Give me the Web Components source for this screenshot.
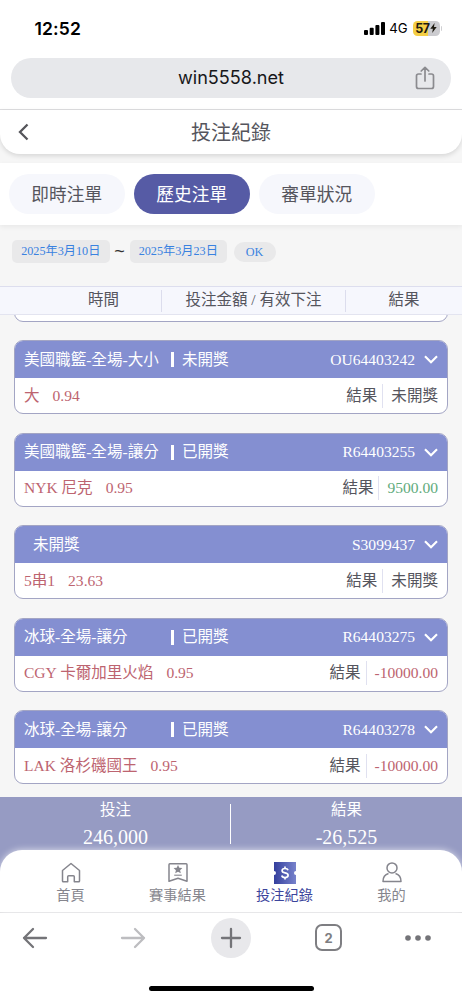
<!DOCTYPE html>
<html lang="zh-Hant">
<head>
<meta charset="UTF-8">
<meta name="viewport" content="width=device-width, initial-scale=1.0">
<title>投注紀錄</title>
<style>
    :root {
        --primary: #565ba5;
        --card-head: #848fd1;
        --card-line: #a3a5c4;
        --text: #55555d;
        --serif: "Liberation Serif", "Noto Sans CJK TC", serif;
        --sans: "Noto Sans CJK TC", sans-serif;
        --ui: Inter, "Liberation Sans", sans-serif;
    }
    body {
        margin: 0;
        width: 462px;
        height: 1000px;
        overflow: hidden;
        background: #f6f6f6;
        font-family: var(--serif);
        color: var(--text);
    }
</style>
</head>
<body>
<bet-app></bet-app>

<script>
// --- Small helper: attach a shadow root with markup --- //
class BaseElement extends HTMLElement {
    connectedCallback() {
        if (this.shadowRoot) return;
        this.attachShadow({ mode: 'open' });
        this.shadowRoot.innerHTML = this.render();
    }
    attr(name) {
        return this.getAttribute(name) || '';
    }
}

// --- Phone status bar --- //
class StatusBar extends BaseElement {
    render() {
        return `
            <style>
                :host {
                    display: flex; align-items: center; justify-content: space-between;
                    box-sizing: border-box; height: 58px; padding: 0 20px 2px 34.5px;
                    background: #fff; color: #000; font-family: var(--ui);
                }
                .time { font-size: 17.5px; font-weight: 600; letter-spacing: 0.15px; }
                .right { display: flex; align-items: center; }
                .net { font-size: 13.2px; margin: 0 5px 0 4.5px; }
                .battery {
                    display: flex; align-items: center; justify-content: center;
                    width: 27px; height: 15px; border-radius: 4.5px; color: #1d1a10;
                    background: linear-gradient(90deg, #f4ce45 57%, #cbcbcf 57%);
                    font-size: 12.5px; font-weight: 700; letter-spacing: -0.5px;
                }
                .tip { width: 1.5px; height: 5px; margin-left: 1px; border-radius: 0 2px 2px 0; background: #cfcfd2; }
            </style>
            <span class="time">12:52</span>
            <div class="right">
                <svg width="21" height="13" viewBox="0 0 21 13">
                    <rect x="0" y="8" width="4" height="5" rx="1"/>
                    <rect x="5.7" y="5.7" width="4" height="7.3" rx="1"/>
                    <rect x="11.4" y="3" width="4" height="10" rx="1"/>
                    <rect x="17" y="0" width="4" height="13" rx="1"/>
                </svg>
                <span class="net">4G</span>
                <span class="battery">57<svg width="7" height="10" viewBox="0 0 7 10"><path d="M4.6 0 .3 5.7h2.6L2.2 10l4.5-5.9H4z" fill="#1d1a10"/></svg></span>
                <span class="tip"></span>
            </div>
        `;
    }
}
customElements.define('status-bar', StatusBar);

// --- Browser address bar --- //
class AddressBar extends BaseElement {
    render() {
        return `
            <style>
                :host { display: block; height: 51px; padding: 0 11px; background: #fff; border-bottom: 1px solid #dedee0; }
                .pill {
                    display: grid; grid-template-columns: 40px 1fr 40px; align-items: center;
                    height: 40px; border-radius: 20px; background: #e7e8eb;
                }
                .url { grid-column: 2; text-align: center; font: 18.1px var(--ui); color: #17171a; padding-bottom: 2px; }
                svg { margin-left: 4px; }
            </style>
            <div class="pill">
                <span class="url"><slot></slot></span>
                <svg width="20" height="24" viewBox="0 0 20 24" fill="none" stroke="#8b8b8f" stroke-width="1.7" stroke-linecap="round" stroke-linejoin="round">
                    <path d="M6 8H3.5Q1.5 8 1.5 10v10.500q0 2 2 2h13q2 0 2-2V10q0-2-2-2H14M10 15V1.500M6.200 5 10 1.300 13.800 5"/>
                </svg>
            </div>
        `;
    }
}
customElements.define('address-bar', AddressBar);

// --- Page title with back arrow --- //
class PageHeader extends BaseElement {
    render() {
        return `
            <style>
                :host {
                    display: grid; grid-template-columns: 48px 1fr 48px; align-items: center;
                    height: 44px; background: #fff; border-radius: 0 0 20px 20px;
                    box-shadow: 0 2px 5px rgba(0,0,0,0.13);
                }
                .title { text-align: center; font: 20px/44px var(--sans); height: 44px; }
                svg { margin-left: 17px; }
            </style>
            <svg width="13" height="18" viewBox="0 0 13 18" fill="none" stroke="#55555a" stroke-width="2.300"><path d="M10.500 1.500 3 9l7.500 7.500"/></svg>
            <span class="title"><slot></slot></span>
        `;
    }
}
customElements.define('page-header', PageHeader);

// --- Tabs --- //
class TabItem extends BaseElement {
    render() {
        return `
            <style>
                :host {
                    display: block; width: 115.500px; height: 40px; border-radius: 20px;
                    background: #f6f7fc; text-align: center; font: 17.700px/38px var(--sans);
                }
                :host([active]) { background: var(--primary); color: #fff; }
            </style>
            <slot></slot>
        `;
    }
}
customElements.define('tab-item', TabItem);

class TabBar extends BaseElement {
    render() {
        return `
            <style>
                :host {
                    display: flex; gap: 9.500px; box-sizing: border-box; height: 62px; margin-top: 9px;
                    padding: 11px 9px; background: #fff; box-shadow: 0 2px 5px rgba(0,0,0,0.06);
                }
            </style>
            <slot></slot>
        `;
    }
}
customElements.define('tab-bar', TabBar);

// --- Date range filter --- //
class DateRange extends BaseElement {
    render() {
        return `
            <style>
                :host { display: flex; align-items: center; height: 24px; margin: 14px 0 0 12px; color: #3a82e0; font-size: 12.200px; }
                .date { width: 97.500px; height: 23px; line-height: 23px; border-radius: 5px; background: #e9e9ea; text-align: center; }
                .sep { width: 20px; text-align: center; color: #333; font: 18px/22px "Liberation Sans", sans-serif; }
                .ok { width: 42px; height: 20px; line-height: 20px; margin: 1px 0 0 6.500px; border-radius: 10px; background: #e9e9ea; text-align: center; }
            </style>
            <span class="date">${this.attr('from')}</span>
            <span class="sep">~</span>
            <span class="date">${this.attr('to')}</span>
            <span class="ok">OK</span>
        `;
    }
}
customElements.define('date-range', DateRange);

// --- Column titles --- //
class ColumnTitles extends BaseElement {
    render() {
        return `
            <style>
                :host {
                    display: grid; grid-template-columns: 161px 184px 117px; align-items: center;
                    box-sizing: border-box; height: 29px; margin-top: 23px; background: #f6f7fd;
                    border-top: 1px solid #dddeee; border-bottom: 1px solid #e3e4f0;
                    font-size: 15.500px; line-height: 20px; text-align: center;
                }
                span { padding-bottom: 2px; }
                span + span { border-left: 1px solid #dcdded; }
                .first { padding-left: 46px; }
            </style>
            <span class="first">時間</span><span>投注金額 / 有效下注</span><span>結果</span>
        `;
    }
}
customElements.define('column-titles', ColumnTitles);

// --- Bet card --- //
class BetCard extends BaseElement {
    render() {
        const game = this.attr('game');
        const amount = this.attr('result');
        const tone = amount.startsWith('-') ? 'lose' : /^\d/.test(amount) ? 'win' : '';
        return `
            <style>
                :host {
                    display: block; box-sizing: border-box; height: 74px; margin-bottom: 18.500px;
                    border: 1px solid var(--card-line); border-radius: 9px; overflow: hidden;
                    background: #fff; font-size: 15.550px; line-height: 24px;
                }
                .head {
                    display: flex; align-items: center; height: 37px; padding: 0 9px;
                    background: var(--card-head); color: #fff;
                }
                .game { width: 147px; }
                .bar { width: 2.500px; height: 15px; background: #fff; margin-right: 8.500px; }
                .head.plain .state { margin-left: 9px; }
                .no { margin-left: auto; }
                .head svg { margin-left: 9px; }
                .body { display: flex; align-items: center; height: 35px; padding: 0 9px; }
                .pick { color: #bd6470; white-space: pre; }
                .odds { margin-left: 13px; }
                .label { margin-left: auto; }
                .value { margin-left: 5px; padding-left: 8px; border-left: 1px solid #e0e1f0; }
                .win { color: #61ab7c; }
                .lose { color: #bd6470; }
            </style>
            <div class="head ${game ? '' : 'plain'}">
                ${game ? `<span class="game">${game}</span><i class="bar"></i>` : ''}
                <span class="state">${this.attr('state')}</span>
                <span class="no">${this.attr('no')}</span>
                <svg width="14" height="9" viewBox="0 0 14 9" fill="none" stroke="#fff" stroke-width="2.200"><path d="M1 1.200 7 7.200l6-6"/></svg>
            </div>
            <div class="body">
                <span class="pick">${this.attr('pick')}<span class="odds">${this.attr('odds')}</span></span>
                <span class="label">結果</span>
                <span class="value ${tone}">${amount}</span>
            </div>
        `;
    }
}
customElements.define('bet-card', BetCard);

class BetList extends BaseElement {
    render() {
        return `
            <style>
                :host { display: block; box-sizing: border-box; height: 482px; padding: 0 14px; overflow: hidden; }
                .tail { overflow: hidden; height: 7px; margin-bottom: 18px; }
                .tail::before {
                    content: ""; display: block; box-sizing: border-box; height: 40px; margin-top: -33px;
                    border: 1px solid var(--card-line); border-radius: 9px; background: #fff;
                }
            </style>
            <div class="tail"></div>
            <slot></slot>
        `;
    }
}
customElements.define('bet-list', BetList);

// --- Totals --- //
class TotalBar extends BaseElement {
    render() {
        return `
            <style>
                :host {
                    display: grid; grid-template-columns: 1fr 1fr; box-sizing: border-box;
                    height: 86px; margin-bottom: -33px; background: #969bc3; color: #fff; text-align: center;
                }
                .cell { position: relative; }
                .cell + .cell::before {
                    content: ""; position: absolute; left: -1px; top: 7px;
                    width: 1px; height: 40px; background: #fff;
                }
                .label { font-size: 15.500px; line-height: 25px; }
                .sum { font-size: 20px; line-height: 30px; }
            </style>
            <div class="cell"><div class="label">投注</div><div class="sum">${this.attr('stake')}</div></div>
            <div class="cell"><div class="label">結果</div><div class="sum">${this.attr('result')}</div></div>
        `;
    }
}
customElements.define('total-bar', TotalBar);

// --- Site navigation --- //
class NavItem extends BaseElement {
    render() {
        return `
            <style>
                :host { display: flex; flex-direction: column; align-items: center; width: 107px; color: #85858d; font: 14.200px/20px var(--sans); }
                :host([active]) { color: #3c459c; }
                .icon { display: flex; height: 22px; }
            </style>
            <span class="icon"><slot name="icon"></slot></span>
            <span><slot></slot></span>
        `;
    }
}
customElements.define('nav-item', NavItem);

class SiteNav extends BaseElement {
    render() {
        return `
            <style>
                :host {
                    display: flex; justify-content: center; position: relative; box-sizing: border-box;
                    height: 62px; padding-top: 12px; background: #fff; border-radius: 22px 22px 0 0;
                    box-shadow: 0 0 7px rgba(255,255,255,0.7);
                }
                svg { display: block; }
            </style>
            <nav-item><svg slot="icon" width="20" height="22" viewBox="0 0 20 22" fill="none" stroke="#85858d" stroke-width="1.500" stroke-linejoin="round">
                <path d="M1.500 8.500 10 1.500l8.500 7V19q0 .8-.8.8h-4.400v-5q0-1-1-1H7.700q-1 0-1 1v5H2.300q-.8 0-.8-.8z"/>
            </svg>首頁</nav-item>
            <nav-item><svg slot="icon" width="20" height="22" viewBox="0 0 20 22" fill="none" stroke="#85858d" stroke-width="1.500" stroke-linejoin="round">
                <path d="M1.900 1.800h16.200q.9 0 .9 1v16.500L10 16.300l-9 3V2.800q0-1 .9-1z"/>
                <path d="m10 3 1.300 2.800 3.100.3-2.300 2.100.7 3.100-2.800-1.600-2.800 1.600.7-3.100-2.300-2.100 3.100-.3z" fill="#85858d" stroke="none"/>
                <path d="M6.200 13.200h7.600" stroke-width="1.100"/>
            </svg>賽事結果</nav-item>
            <nav-item active><svg slot="icon" width="22" height="22" viewBox="0 0 22 22">
                <defs><linearGradient id="ticket" x1="0" y1="0" x2="1" y2="0"><stop offset="0" stop-color="#343f9d"/><stop offset="1" stop-color="#7883cc"/></linearGradient></defs>
                <path d="M0 0h22v9a2 2 0 0 0 0 4v9H0v-9a2 2 0 0 0 0-4z" fill="url(#ticket)"/>
                <path d="M14 8.300c-.3-1.200-1.400-1.800-3-1.800-1.700 0-2.900.8-2.900 2.200 0 3.200 6 1.300 6 4.500 0 1.500-1.300 2.300-3.100 2.300-1.700 0-2.900-.7-3.200-2M11 4.500v2M11 15.500v2" fill="none" stroke="#fff" stroke-width="1.700"/>
            </svg>投注紀錄</nav-item>
            <nav-item><svg slot="icon" width="20" height="22" viewBox="0 0 20 22" fill="none" stroke="#85858d" stroke-width="1.500" stroke-linejoin="round">
                <circle cx="10" cy="5.900" r="5"/>
                <path d="M6.500 11.500Q1 13 1 19.500h18q0-6.500-5.500-8"/>
            </svg>我的</nav-item>
        `;
    }
}
customElements.define('site-nav', SiteNav);

// --- Browser toolbar --- //
class BrowserToolbar extends BaseElement {
    render() {
        return `
            <style>
                :host { display: block; height: 88px; background: #fff; border-top: 1px solid #dcdcdf; }
                .row { display: grid; grid-template-columns: 70px 126px 70px 125px 54px; align-items: center; justify-items: center; height: 49px; }
                .add { display: grid; place-items: center; width: 40px; height: 40px; border-radius: 50%; background: #e8e8eb; }
                .tabs {
                    display: grid; place-items: center; box-sizing: border-box; width: 27px; height: 27px;
                    border: 2px solid #7e7e82; border-radius: 7px; font: 700 13px var(--ui); color: #7e7e82;
                }
                .home { width: 165px; height: 5.500px; border-radius: 3px; margin: 23.500px auto 0; background: #000; }
                svg { display: block; fill: none; stroke: #747478; stroke-width: 2.300; stroke-linecap: round; stroke-linejoin: round; }
            </style>
            <div class="row">
                <svg width="26" height="22" viewBox="0 0 26 22"><path d="M24 11H2M11 2 2 11l9 9"/></svg>
                <svg width="26" height="22" viewBox="0 0 26 22" style="stroke:#bdbdc0"><path d="M2 11h22M15 2l9 9-9 9"/></svg>
                <span class="add"><svg width="22" height="22" viewBox="0 0 22 22"><path d="M11 2v18M2 11h18"/></svg></span>
                <span class="tabs">2</span>
                <svg width="26" height="8" viewBox="0 0 26 8" style="fill:#747478;stroke:none"><circle cx="3" cy="4" r="2.800"/><circle cx="13" cy="4" r="2.800"/><circle cx="23" cy="4" r="2.800"/></svg>
            </div>
            <div class="home"></div>
        `;
    }
}
customElements.define('browser-toolbar', BrowserToolbar);

// --- App shell --- //
class BetApp extends BaseElement {
    render() {
        return `
            <style>
                :host { display: block; }
            </style>
            <status-bar></status-bar>
            <address-bar>win5558.net</address-bar>
            <page-header>投注紀錄</page-header>
            <tab-bar>
                <tab-item>即時注單</tab-item>
                <tab-item active>歷史注單</tab-item>
                <tab-item>審單狀況</tab-item>
            </tab-bar>
            <date-range from="2025年3月10日" to="2025年3月23日"></date-range>
            <column-titles></column-titles>
            <bet-list>
                <bet-card game="美國職籃-全場-大小" state="未開獎" no="OU64403242" pick="大" odds="0.94" result="未開獎"></bet-card>
                <bet-card game="美國職籃-全場-讓分" state="已開獎" no="R64403255" pick="NYK 尼克" odds="0.95" result="9500.00"></bet-card>
                <bet-card state="未開獎" no="S3099437" pick="5串1" odds="23.63" result="未開獎"></bet-card>
                <bet-card game="冰球-全場-讓分" state="已開獎" no="R64403275" pick="CGY 卡爾加里火焰" odds="0.95" result="-10000.00"></bet-card>
                <bet-card game="冰球-全場-讓分" state="已開獎" no="R64403278" pick="LAK 洛杉磯國王" odds="0.95" result="-10000.00"></bet-card>
            </bet-list>
            <total-bar stake="246,000" result="-26,525"></total-bar>
            <site-nav></site-nav>
            <browser-toolbar></browser-toolbar>
        `;
    }
}
customElements.define('bet-app', BetApp);
</script>
</body>
</html>
